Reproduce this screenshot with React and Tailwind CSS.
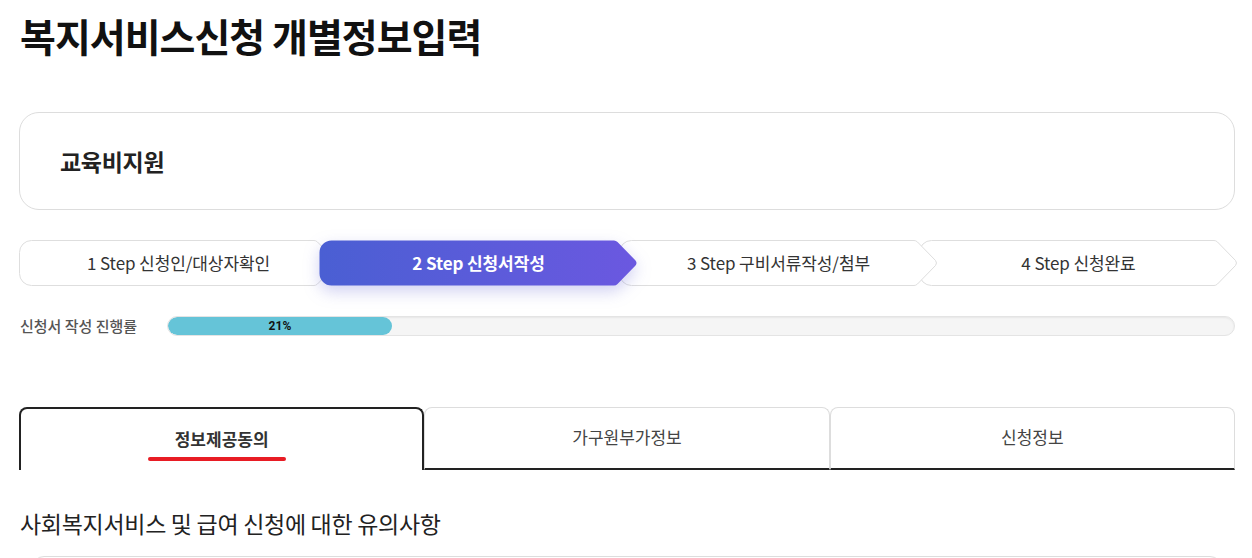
import React from "react";

const KR = { fontFamily: '"Noto Sans CJK KR", "Noto Sans", sans-serif' };

function StepShape({ active, id }) {
  const d =
    "M12.5 0.5 H295 Q297 0.5 298.5 2 L316.5 20.5 Q318.5 23 316.5 25.5 L298.5 44 Q297 45.5 295 45.5 H12.5 A12 12 0 0 1 0.5 33.5 V12.5 A12 12 0 0 1 12.5 0.5 Z";
  return (
    <svg
      width="319"
      height="46"
      viewBox="0 0 319 46"
      className={
        "absolute inset-0 " +
        (active ? "drop-shadow-[0_6px_8px_rgba(90,90,210,0.28)]" : "")
      }
    >
      {active && (
        <defs>
          <linearGradient id={id} x1="0" y1="0" x2="1" y2="0">
            <stop offset="0" stopColor="#4a5fd3" />
            <stop offset="1" stopColor="#6b58e0" />
          </linearGradient>
        </defs>
      )}
      <path
        d={d}
        fill={active ? `url(#${id})` : "#ffffff"}
        stroke={active ? "none" : "#dedede"}
        strokeWidth="1"
      />
    </svg>
  );
}

function Step({ label, active, z, first }) {
  return (
    <div
      className={
        "relative w-[319px] h-[46px] shrink-0 flex items-center justify-center " +
        (first ? "" : "-ml-[19px] ") +
        z
      }
    >
      <StepShape active={active} id={"g" + label.slice(0, 1)} />
      <span
        className={
          "relative text-[17px] tracking-[-0.1px] " +
          (active ? "text-white font-bold" : "text-[#333]")
        }
        style={KR}
      >
        {label}
      </span>
    </div>
  );
}

export default function App() {
  return (
    <div className="w-[1252px] min-h-[558px] bg-white overflow-hidden" style={KR}>
      <div className="ml-[19px] w-[1216px]">
        <h1 className="pt-[8px] text-[39px] leading-[54px] font-bold tracking-[-1px] text-[#111] pl-[1px]">
          복지서비스신청 개별정보입력
        </h1>

        <div className="mt-[50px] h-[98px] rounded-[20px] border border-[#dddddd] flex items-center pl-[40px]">
          <span className="text-[23px] font-bold text-[#222] tracking-[-0.3px]">교육비지원</span>
        </div>

        <div className="mt-[30px] flex">
          <Step label="1 Step 신청인/대상자확인" first z="z-10" />
          <Step label="2 Step 신청서작성" active z="z-40" />
          <Step label="3 Step 구비서류작성/첨부" z="z-30" />
          <Step label="4 Step 신청완료" z="z-20" />
        </div>

        <div className="mt-[30px] flex items-center h-[20px]">
          <div className="w-[148px] shrink-0 text-[15px] font-medium text-[#555] pl-[1px]">
            신청서 작성 진행률
          </div>
          <div className="flex-1 h-[20px] rounded-full bg-[#f5f5f5] border border-[#e4e4e4] shadow-[inset_0_1px_2px_rgba(0,0,0,0.06)] overflow-hidden">
            <div
              className="h-full rounded-full bg-[#65c4d8] flex items-center justify-center"
              style={{ width: "21%" }}
            >
              <span
                className="text-[12px] font-bold text-[#111]"
                style={{ fontFamily: 'Roboto, "Liberation Sans", sans-serif' }}
              >
                21%
              </span>
            </div>
          </div>
        </div>

        <div className="mt-[71px] grid grid-cols-3 h-[63px]">
          <div className="relative border-2 border-b-0 border-[#222] rounded-t-[8px] flex items-center justify-center">
            <span className="text-[17px] font-bold text-[#333] -mt-[2px]">정보제공동의</span>
            <span className="absolute left-[127px] right-[136px] bottom-[9px] h-[4px] rounded-full bg-[#e81c24]" />
          </div>
          <div className="border border-[#dddddd] border-b-2 border-b-[#222] rounded-t-[8px] flex items-center justify-center">
            <span className="text-[17px] text-[#444] -mt-[2px]">가구원부가정보</span>
          </div>
          <div className="border border-[#dddddd] border-b-2 border-b-[#222] rounded-t-[8px] flex items-center justify-center">
            <span className="text-[17px] text-[#444] -mt-[2px]">신청정보</span>
          </div>
        </div>

        <h2 className="mt-[37px] text-[23px] leading-[32px] text-[#222] tracking-[-0.3px] pl-[1px]">
          사회복지서비스 및 급여 신청에 대한 유의사항
        </h2>

        <div className="mt-[17px] mx-[13px] h-[40px] border border-[#dddddd] rounded-t-[12px]" />
      </div>
    </div>
  );
}
